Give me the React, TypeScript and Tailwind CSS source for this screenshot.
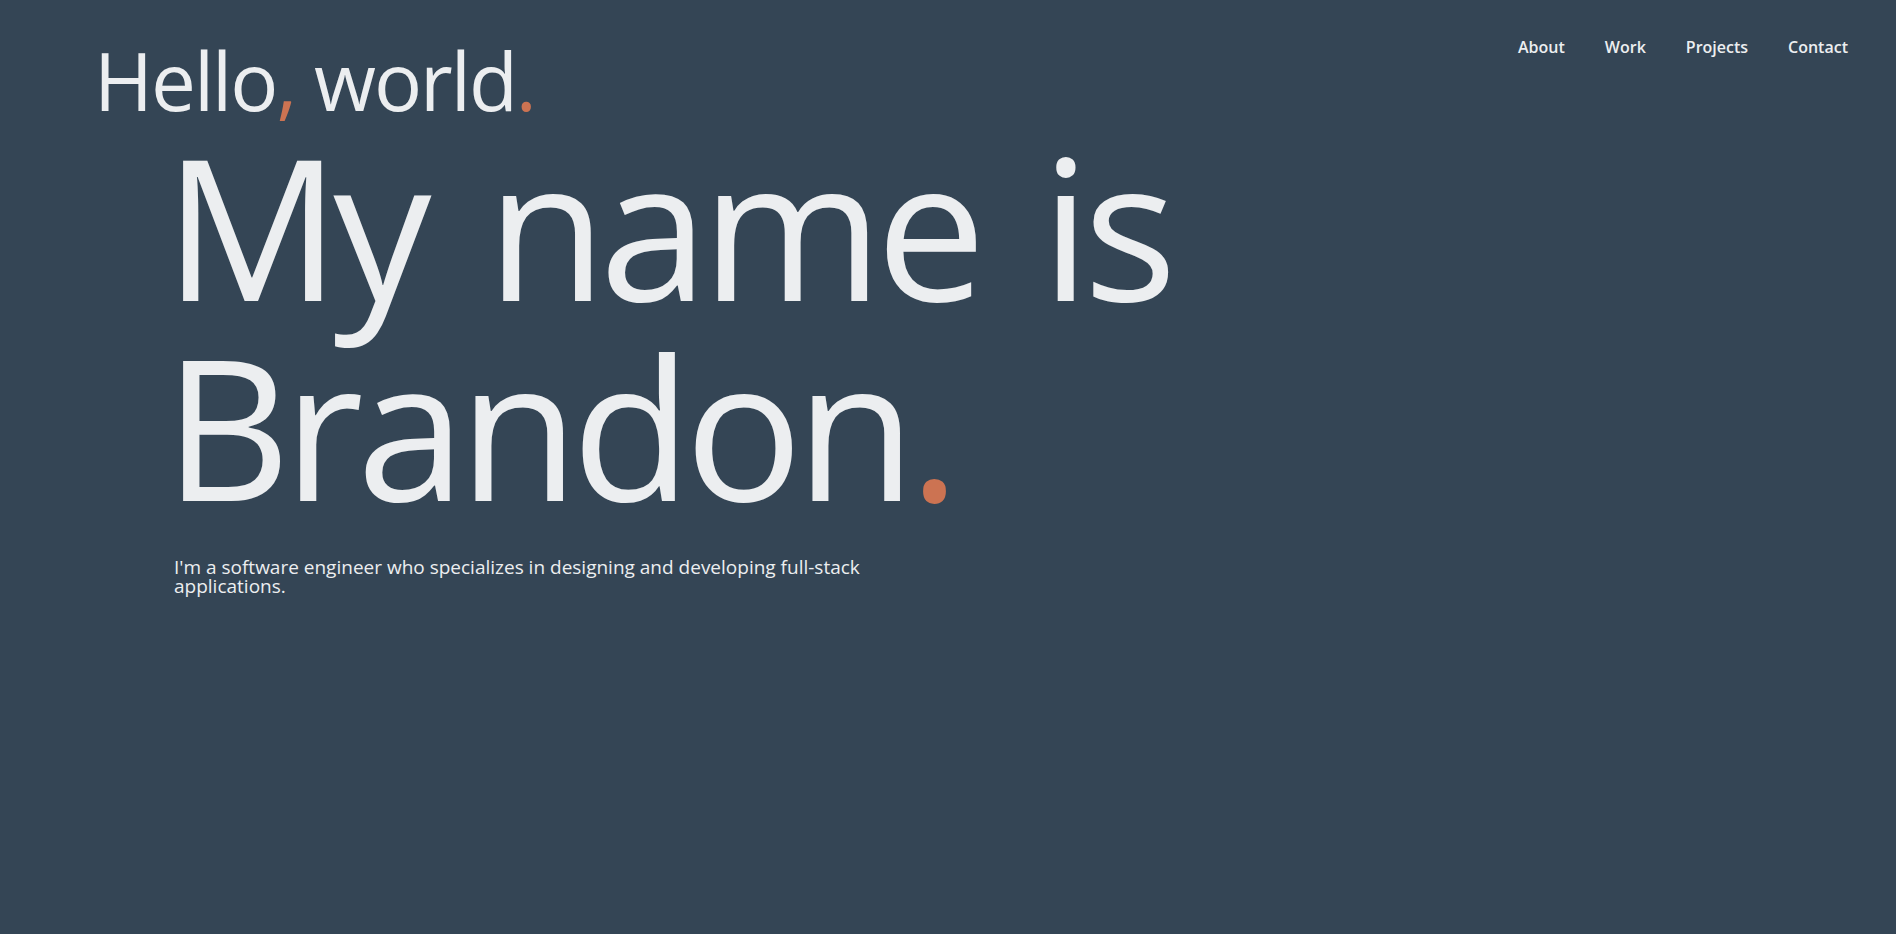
import React from "react";

export default function App() {
  return (
    <div
      className="min-h-screen w-full bg-[#344555] text-[#eceef0]"
      style={{ fontFamily: '"Open Sans", "Noto Sans", sans-serif' }}
    >
      <header className="flex items-start justify-between">
        <h1 className="ml-[94px] mt-[40px] text-[80px] font-normal leading-none tracking-[-2px]">
          Hello<span className="text-[#cc7352]">,</span> world
          <span className="text-[#cc7352]">.</span>
        </h1>
        <nav className="mr-[48px] mt-[35px] flex gap-10 text-base font-semibold leading-6">
          <a href="#about">About</a>
          <a href="#work">Work</a>
          <a href="#projects">Projects</a>
          <a href="#contact">Contact</a>
        </nav>
      </header>
      <main className="pl-[174px]">
        <h2 className="-ml-[10px] mt-[5px] text-[196px] font-normal leading-[200px] tracking-[-7px] [word-spacing:18px]">
          My name is
          <br />
          Brandon<span className="text-[#cc7352]">.</span>
        </h2>
        <p className="mt-[33px] max-w-[740px] text-[19px] leading-[19px]">
          I'm a software engineer who specializes in designing and developing
          full-stack applications.
        </p>
      </main>
    </div>
  );
}
